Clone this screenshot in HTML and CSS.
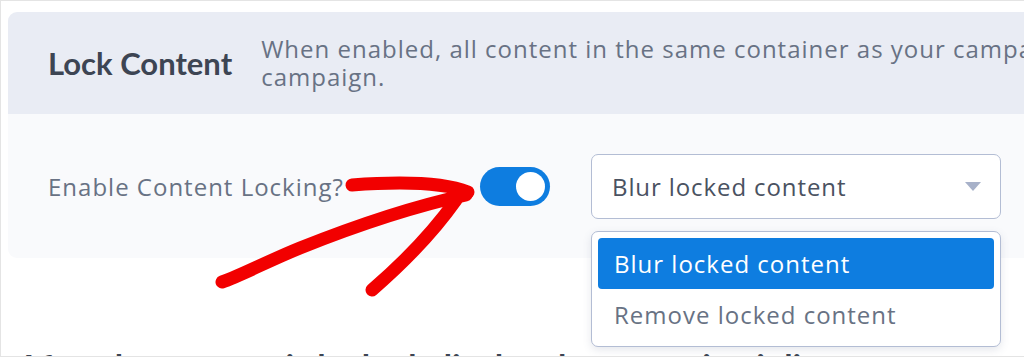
FILE: index.html
```html
<!DOCTYPE html>
<html lang="en">
<head>
<meta charset="utf-8">
<title>Lock Content</title>
<link rel="stylesheet" href="styles.css">
</head>
<body>
<div class="frame">
  <section class="card">
    <header class="card-head">
      <h2 class="title">Lock Content</h2>
      <p class="desc">When enabled, all content in the same container as your campaign will be locked until the visitor converts on your<br>campaign.</p>
    </header>
    <div class="card-body">
      <div class="row">
        <span class="label">Enable Content Locking?</span>
        <span class="toggle"><span class="knob"></span></span>
        <div class="select-wrap">
          <div class="select">
            <span class="select-value">Blur locked content</span>
            <svg class="caret" width="16" height="9" viewBox="0 0 16 9"><path d="M0 0H16L8 9Z" fill="#a7b1c9"/></svg>
          </div>
          <ul class="menu">
            <li class="option active">Blur locked content</li>
            <li class="option">Remove locked content</li>
          </ul>
        </div>
      </div>
    </div>
  </section>
  <h3 class="next">After the content is locked, display the campaign inline</h3>
  <svg class="arrow" width="1024" height="358" viewBox="0 0 1024 358">
    <g fill="none" stroke="#f20000" stroke-width="13" stroke-linecap="round" stroke-linejoin="round">
      <path d="M352 185 C 392 182, 440 181, 468 192"/>
      <path d="M466 195 C 420 205, 360 224, 300 248 C 268 261, 242 275, 222 282"/>
      <path d="M456 200 C 432 234, 402 264, 372 290"/>
    </g>
  </svg>
</div>
</body>
</html>
```

FILE: styles.css
```css
* { box-sizing: border-box; }

html, body {
  margin: 0;
  padding: 0;
  background: #ffffff;
  overflow: hidden;
}

.frame {
  position: relative;
  width: 1024px;
  height: 357px;
  border-top: 1px solid #e4e4e4;
  border-left: 1px solid #e4e4e4;
  border-bottom: 1px solid #e4e4e4;
  padding: 11px 0 0 7px;
  overflow: hidden;
  font-family: "Open Sans", "Noto Sans", sans-serif;
}

.card {
  width: 1200px;
}

.card-head {
  display: flex;
  align-items: center;
  height: 102px;
  padding-left: 40px;
  background: #e9ecf4;
  border-radius: 9px 9px 0 0;
}

.title {
  margin: 0 29px 0 0;
  font-family: Lato, "Open Sans", sans-serif;
  font-size: 31px;
  font-weight: 700;
  color: #3d4553;
  white-space: nowrap;
}

.desc {
  margin: 0;
  font-size: 24px;
  line-height: 28px;
  letter-spacing: 1px;
  color: #687284;
  white-space: nowrap;
}

.card-body {
  display: flex;
  align-items: center;
  height: 144px;
  padding-left: 40px;
  background: #f9fafc;
  border-radius: 0 0 9px 9px;
}

.row {
  display: flex;
  align-items: center;
}

.label {
  width: 432px;
  font-size: 24px;
  letter-spacing: 1px;
  color: #687284;
}

.toggle {
  display: flex;
  align-items: center;
  justify-content: flex-end;
  width: 70px;
  height: 39px;
  padding: 0 5px;
  margin-right: 41px;
  border-radius: 20px;
  background: #0e7de0;
}

.knob {
  width: 29px;
  height: 29px;
  border-radius: 50%;
  background: #ffffff;
}

.select-wrap {
  position: relative;
  width: 410px;
}

.select {
  display: flex;
  align-items: center;
  justify-content: space-between;
  height: 65px;
  padding: 0 19px 0 20px;
  border: 1.5px solid #b3bdd4;
  border-radius: 7px;
  background: #ffffff;
}

.select-value {
  font-size: 24px;
  letter-spacing: 0.9px;
  color: #4a5261;
}

.menu {
  position: absolute;
  left: 0;
  top: 77px;
  width: 410px;
  margin: 0;
  padding: 6px;
  list-style: none;
  border: 1.5px solid #b3bdd4;
  border-radius: 7px;
  background: #ffffff;
  box-shadow: 0 3px 8px rgba(80, 95, 130, 0.15);
  z-index: 2;
}

.option {
  display: flex;
  align-items: center;
  height: 51px;
  padding-left: 16px;
  font-size: 24px;
  letter-spacing: 1px;
  color: #687284;
  border-radius: 4px;
}

.option.active {
  background: #0e7de0;
  color: #ffffff;
}

.next {
  margin: 88px 0 0 9px;
  font-family: Lato, "Open Sans", sans-serif;
  font-size: 34px;
  font-weight: 700;
  color: #3d4553;
  white-space: nowrap;
}

.arrow {
  position: absolute;
  left: -1px;
  top: -1px;
  pointer-events: none;
  z-index: 3;
}
```
